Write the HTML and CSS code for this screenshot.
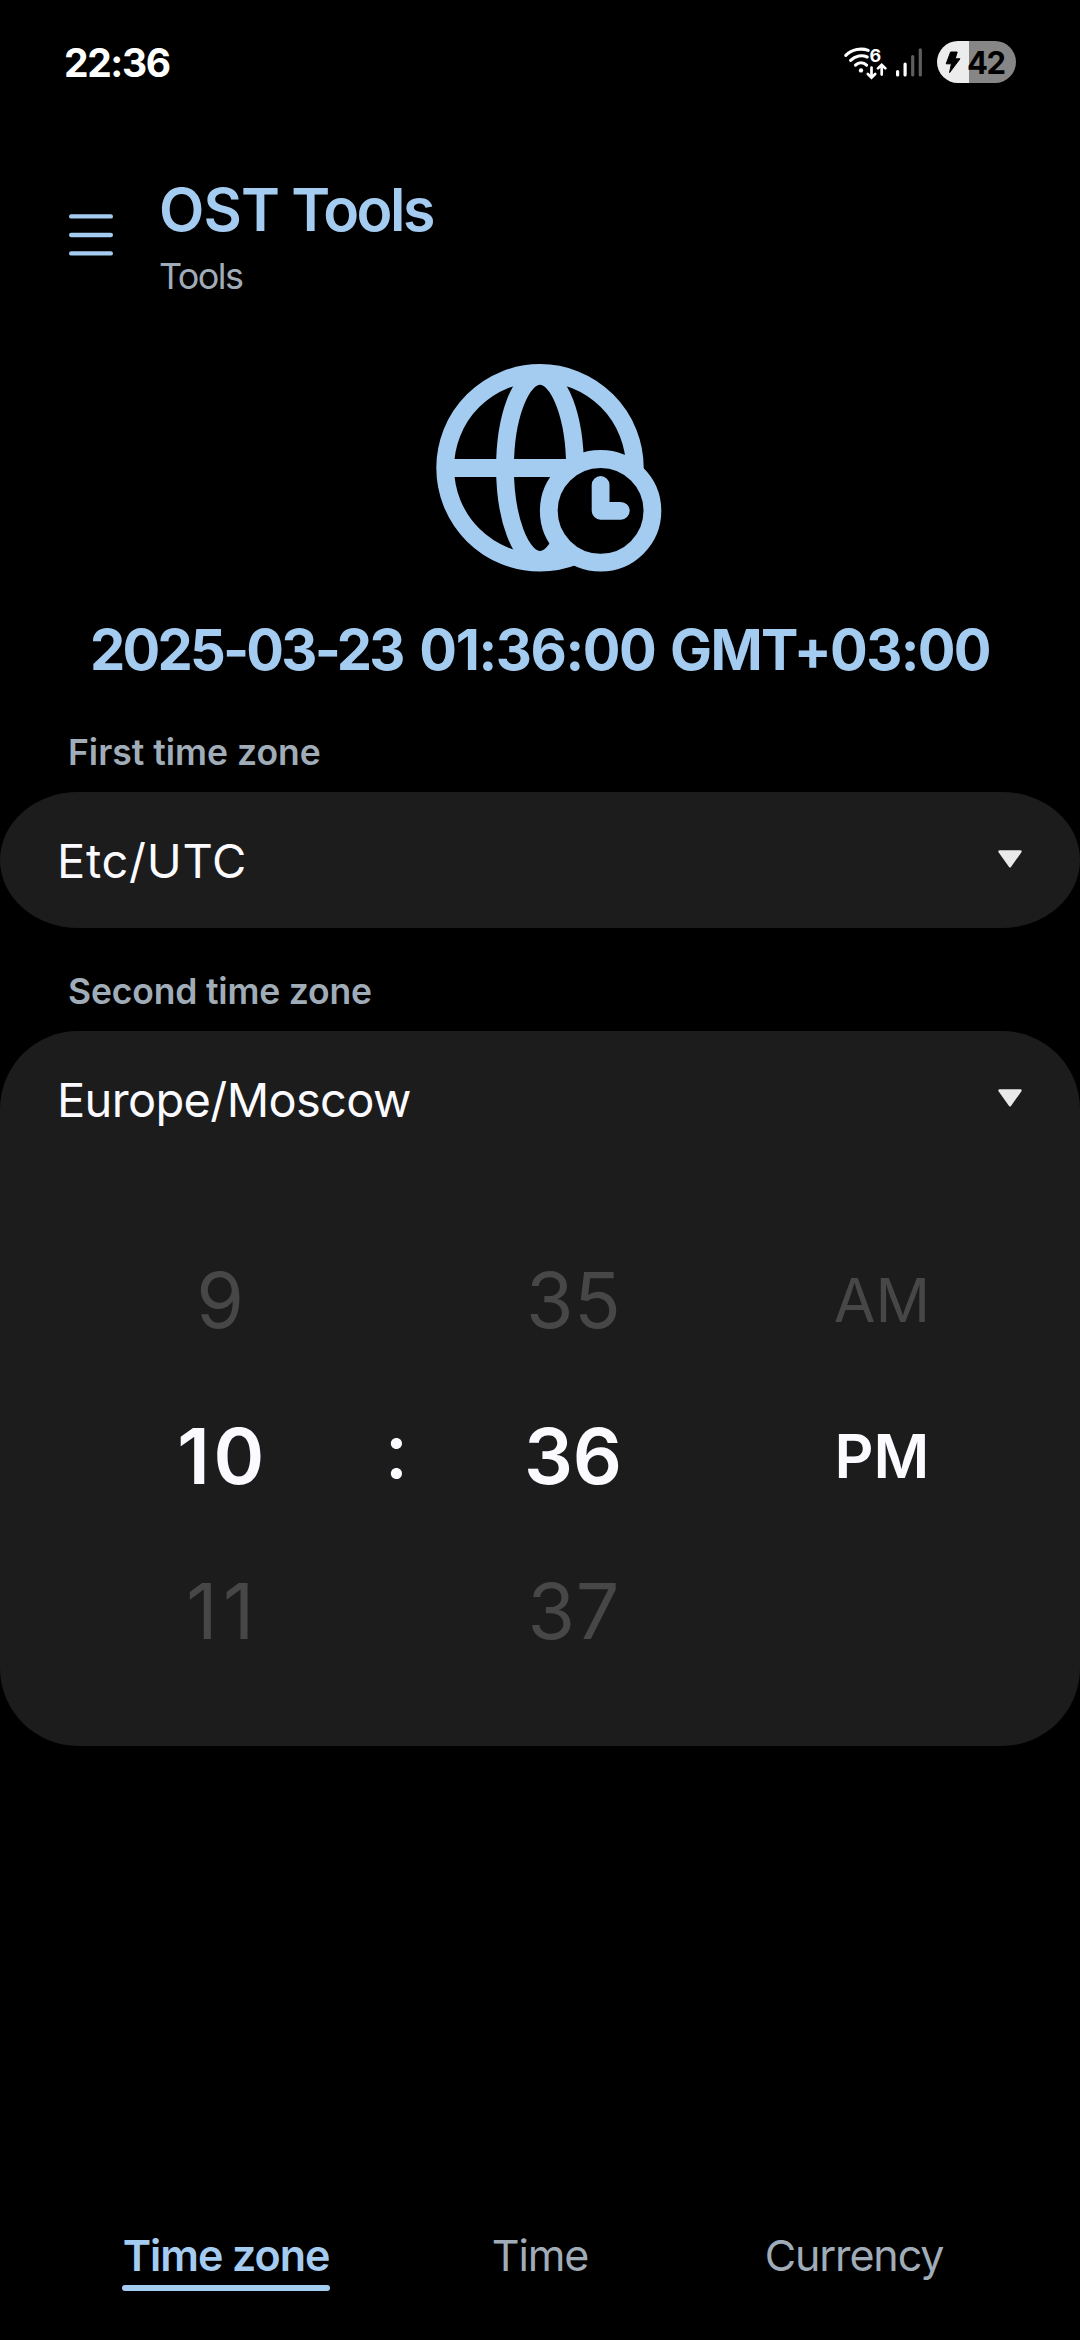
FILE: index.html
```
<!DOCTYPE html>
<html lang="en">
<head>
<meta charset="utf-8">
<title>OST Tools</title>
<link rel="stylesheet" href="styles.css">
</head>
<body>
<div class="screen">
  <div class="status">
    <span class="clock">22:36</span>
    <div class="status-icons">
      <svg class="signals" width="102" height="50" viewBox="0 0 102 50" fill="none" stroke="#fff" stroke-linecap="round">
        <g stroke-width="3.1">
          <path d="M10.8 20.3C17 14.2 26.5 12.8 33.2 15.4"/>
          <path d="M15.6 25.4C20.3 20.6 27 19.6 32.2 22"/>
          <path d="M20.5 30.2C23.6 27 28.4 27 31.6 30.2"/>
        </g>
        <circle cx="26" cy="35.4" r="2.2" fill="#fff" stroke="none"/>
        <text class="wifi-gen" x="34.6" y="27.4">6</text>
        <path stroke-width="2.7" d="M36.5 32.6V42.4M32.8 39L36.5 42.6L40.2 39M46.7 39.6V30M43 33.4L46.7 29.8L50.4 33.4"/>
        <path stroke-width="3.2" d="M62.6 36.6V40M70.1 29V40"/>
        <path stroke="#5e5e5e" stroke-width="3.2" d="M77.7 21.6V40M85.3 14.8V40"/>
      </svg>
      <div class="battery">
        <svg width="16" height="22" viewBox="0 0 16 22"><path d="M5.6 1H12.2L10.2 7.8H15L4.6 21.6L6.4 12.8H1.2Z" fill="#000" stroke="#000" stroke-width="1" stroke-linejoin="round"/></svg>
        <span class="level">42</span>
      </div>
    </div>
  </div>

  <header class="header">
    <svg class="menu" width="44" height="48" viewBox="0 0 44 48" stroke="#a4cbf0" stroke-width="4.4" stroke-linecap="round"><path d="M2.2 5.4H41.8M2.2 24H41.8M2.2 42.4H41.8"/></svg>
    <div>
      <h1 class="title"><span class="title-lead">OST</span> Tools</h1>
      <p class="subtitle">Tools</p>
    </div>
  </header>

  <main class="content">
    <svg class="globe" width="260" height="240" viewBox="-10 0 260 240" fill="none" stroke="#a4cbf0" stroke-width="17.8" stroke-linecap="round" stroke-linejoin="round">
      <circle cx="120" cy="117.8" r="94.8"/>
      <ellipse cx="120" cy="117.8" rx="35" ry="92"/>
      <path d="M26 118H160"/>
      <circle cx="180.6" cy="160.8" r="51.8" fill="#000"/>
      <path d="M180.6 135V160.8H200.8"/>
    </svg>
    <div class="datetime"><span class="date">2025-03-23</span> <span class="time">01:36:00</span> GMT+03:00</div>

    <h2 class="label">First time zone</h2>
    <section class="card card-pill">
      <div class="select"><span class="zone-first">Etc/UTC</span><svg width="24" height="18" viewBox="0 0 24 18"><path d="M1.5 1.5H22.5L12 16.3Z" fill="#eaeaea" stroke="#eaeaea" stroke-width="2.4" stroke-linejoin="round"/></svg></div>
    </section>

    <h2 class="label label-second">Second time zone</h2>
    <section class="card">
      <div class="select"><span class="zone-second">Europe/Moscow</span><svg width="24" height="18" viewBox="0 0 24 18"><path d="M1.5 1.5H22.5L12 16.3Z" fill="#eaeaea" stroke="#eaeaea" stroke-width="2.4" stroke-linejoin="round"/></svg></div>
      <div class="picker">
        <div class="wheel"><span>9</span><span class="current ten">10</span><span class="eleven">11</span></div>
        <div class="colon">:</div>
        <div class="wheel"><span class="near">35</span><span class="current">36</span><span class="near">37</span></div>
        <div class="wheel period"><span>AM</span><span class="current">PM</span></div>
      </div>
    </section>
  </main>

  <nav class="tabs">
    <span class="tab active">Time zone</span>
    <span class="tab">Time</span>
    <span class="tab">Currency</span>
  </nav>
</div>
</body>
</html>
```
FILE: styles.css
```
* { box-sizing: border-box; margin: 0; padding: 0; }

body {
  background: #000;
  color: #fafaff;
  font-family: "Inter", "Roboto", sans-serif;
}

svg { display: block; flex: none; }

.screen {
  width: 1080px;
  height: 2340px;
  display: flex;
  flex-direction: column;
  overflow: hidden;
}

/* Status bar */
.status {
  height: 124px;
  padding: 0 64px;
  display: flex;
  align-items: center;
  justify-content: space-between;
}
.clock { font-size: 39px; font-weight: 700; letter-spacing: -1.4px; color: #fff; }
.status-icons { display: flex; align-items: center; }
.signals { margin-top: -4px; }
.wifi-gen { font-size: 18px; font-weight: 700; fill: #fff; stroke: none; }
.battery {
  width: 79px;
  height: 42px;
  border-radius: 21px;
  padding-left: 8px;
  display: flex;
  align-items: center;
  gap: 6px;
  background: linear-gradient(90deg, #ececec 32.4px, #868686 32.4px);
  color: #000;
}
.level { font-size: 31px; font-weight: 700; line-height: 42px; letter-spacing: -1.4px; padding-top: 2px; }

/* App header */
.header {
  height: 222px;
  padding: 50px 69px 0;
  display: flex;
  gap: 46px;
}
.menu { margin-top: 37px; }
.title { font-size: 59px; font-weight: 600; line-height: 71px; letter-spacing: -2.5px; color: #a4cbf0; }
.title-lead { letter-spacing: -.9px; }
.subtitle { margin-top: 6px; font-size: 36px; line-height: 50px; letter-spacing: -1.58px; color: #a0adb8; }

/* Content */
.globe { margin: 4px auto 0; }
.datetime {
  margin-top: 25px;
  font-size: 56px;
  font-weight: 700;
  line-height: 71px;
  letter-spacing: -1.66px;
  text-align: center;
  white-space: nowrap;
  color: #a4cbf0;
}
.date { letter-spacing: -2.8px; margin-right: 5px; }
.time { letter-spacing: -1.4px; margin-right: 3px; }
.label {
  margin: 42px 68px 14px;
  font-size: 35.5px;
  font-weight: 600;
  line-height: 50px;
  color: #a0adb8;
}
.label-second { margin-top: 39px; letter-spacing: -.18px; }
.card { background: #1c1c1c; border-radius: 78px; padding-bottom: 56.5px; }
.card-pill { border-radius: 78px / 68px; padding-bottom: 0; }
.select {
  height: 136px;
  padding: 0 58px 0 57px;
  display: flex;
  align-items: center;
  justify-content: space-between;
  font-size: 47px;
  line-height: 136px;
}
.select svg { margin-top: -2px; }
.zone-first { letter-spacing: .69px; padding-top: 2px; }
.zone-second { letter-spacing: -.66px; padding-top: 2px; }

/* Time picker */
.picker {
  display: grid;
  grid-template-columns: 176px 177px 309px 176px;
  padding: 56px 0 0 132px;
  font-size: 77px;
  line-height: 155.5px;
}
.wheel { width: 176px; display: flex; flex-direction: column; text-align: center; color: #474747; }
.wheel .current { color: #fafaff; font-weight: 600; }
.wheel .ten { letter-spacing: 3.6px; text-indent: 5px; }
.eleven { letter-spacing: 5.4px; text-indent: 6px; }
.near { letter-spacing: .6px; text-indent: 1.4px; }
.colon { text-align: center; padding-top: 150px; font-weight: 500; }
.period { font-size: 60.5px; }

/* Bottom tabs */
.tabs {
  margin-top: auto;
  height: 111px;
  padding: 0 69px;
  display: grid;
  grid-template-columns: repeat(3, 1fr);
  justify-items: center;
  align-items: start;
}
.tab { font-size: 43px; line-height: 53px; letter-spacing: -1.1px; color: #a0adb8; white-space: nowrap; }
.active { color: #a4cbf0; font-weight: 600; letter-spacing: -1.05px; }
.active::after {
  content: "";
  display: block;
  height: 6px;
  margin: 3px -1px 0;
  border-radius: 3px;
  background: #a4cbf0;
}
```
